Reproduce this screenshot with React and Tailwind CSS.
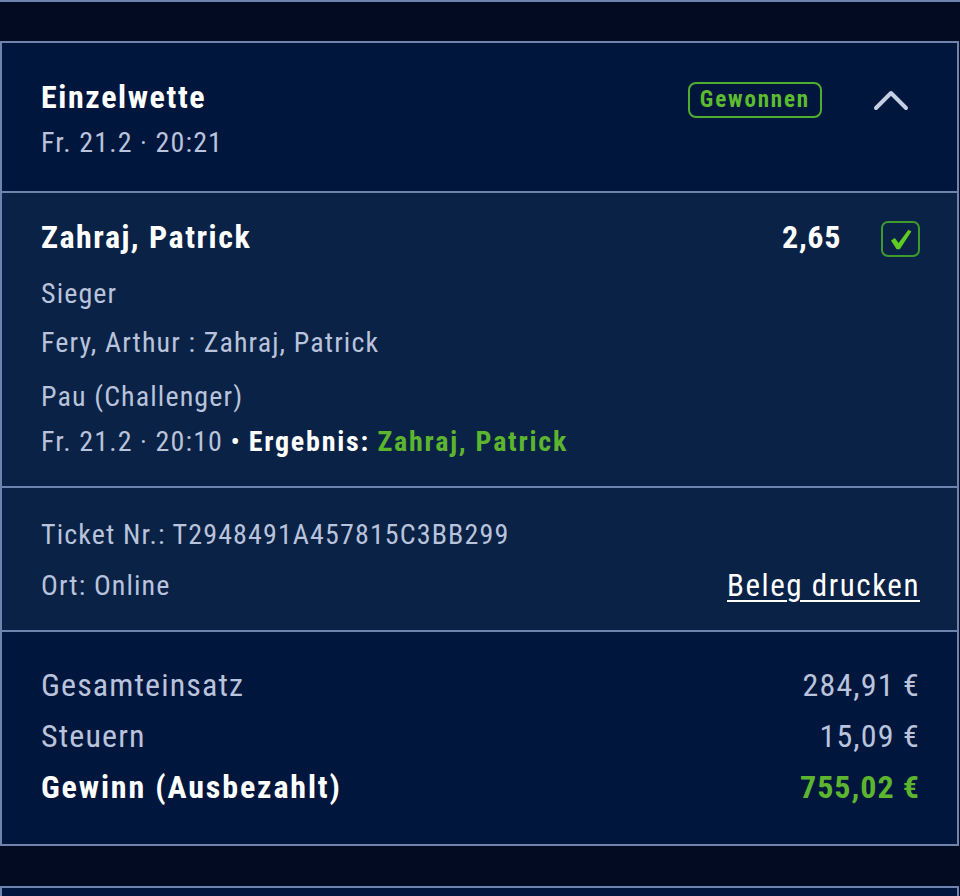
import React from 'react';

const ChevronUp = () => (
  <svg width="36" height="22" viewBox="0 0 36 22" fill="none" className="mr-[11px]">
    <path d="M3 19 L18 4 L33 19" stroke="#c6cee4" strokeWidth="4" strokeLinecap="round" strokeLinejoin="round" />
  </svg>
);

const CheckMark = () => (
  <svg width="22" height="21" viewBox="0 0 22 21">
    <path d="M1 11.5 L4.8 9 L8.6 14 L18.4 0.8 L21.4 2.6 L9.8 20.2 L6.6 20.2 Z" fill="#5fcc24" />
  </svg>
);

const SummaryRow = ({ label, value, strong }) => (
  <div className="flex items-center justify-between leading-[40px]">
    <span className={strong ? 'font-bold tracking-[0.058em] text-white' : 'text-[#b9c3dc]'}>{label}</span>
    <span className={strong ? 'font-bold tracking-[0.03em] text-[#5db52f]' : 'text-[#b9c3dc]'}>{value}</span>
  </div>
);

export default function App() {
  return (
    <div className="min-h-[896px] bg-[#020b22] font-['Roboto_Condensed',Roboto,sans-serif] tracking-[0.07em]">
      <div className="h-[2px] bg-[#6f84ad]" />
      <div className="h-[39px]" />

      <div className="mr-[1px] border-2 border-[#6f84ad]">
        {/* header */}
        <div className="flex items-start justify-between bg-[#01163d] pb-[30px] pl-[39px] pr-[37px] pt-[34px]">
          <div>
            <div className="text-[32px] font-bold leading-[40px] tracking-[0.05em] text-white">Einzelwette</div>
            <div className="mt-2 text-[28px] leading-[36px] text-[#b9c3dc]">Fr. 21.2 · 20:21</div>
          </div>
          <div className="mt-[5px] flex items-center gap-[51px]">
            <span className="rounded-[8px] border-2 border-[#4fae2f] px-[10px] text-[23px] font-bold leading-[32px] tracking-[0.08em] text-[#5dbb30]">
              Gewonnen
            </span>
            <ChevronUp />
          </div>
        </div>

        {/* selection */}
        <div className="border-t-2 border-[#6f84ad] bg-[#0a2246] pb-[26px] pl-[39px] pr-[37px] pt-[24px]">
          <div className="flex items-start justify-between">
            <span className="text-[32px] font-bold leading-[40px] tracking-[0.047em] text-white">Zahraj, Patrick</span>
            <div className="flex items-start gap-[40px]">
              <span className="text-[32px] font-bold leading-[40px] tracking-[0.02em] text-white">2,65</span>
              <span className="mt-[4px] flex h-[36px] w-[39px] items-center justify-center rounded-[7px] border-2 border-[#3f9a2e]">
                <CheckMark />
              </span>
            </div>
          </div>
          <div className="text-[28px] leading-[36px] text-[#b9c3dc]">
            <div className="mt-[19px]">Sieger</div>
            <div className="mt-[13px]">Fery, Arthur : Zahraj, Patrick</div>
            <div className="mt-[18px]">Pau (Challenger)</div>
            <div className="mt-[9px]">
              Fr. 21.2 · 20:10 <span className="text-white">•</span>{' '}
              <span className="font-bold tracking-[0.063em] text-white">Ergebnis:</span>{' '}
              <span className="font-bold tracking-[0.063em] text-[#5db52f]">Zahraj, Patrick</span>
            </div>
          </div>
        </div>

        {/* ticket */}
        <div className="border-t-2 border-[#6f84ad] bg-[#0a2246] pb-[26px] pl-[39px] pr-[37px] pt-[29px] text-[28px] leading-[36px] text-[#b9c3dc]">
          <div>Ticket Nr.: T2948491A457815C3BB299</div>
          <div className="mt-[15px] flex items-center justify-between">
            <span>Ort: Online</span>
            <a className="text-[31px] tracking-[0.05em] text-white underline decoration-2 underline-offset-[4px]">Beleg drucken</a>
          </div>
        </div>

        {/* summary */}
        <div className="space-y-[11px] border-t-2 border-[#6f84ad] bg-[#01163d] pb-[37px] pl-[39px] pr-[37px] pt-[33px] text-[32px]">
          <SummaryRow label="Gesamteinsatz" value="284,91 €" />
          <SummaryRow label="Steuern" value="15,09 €" />
          <SummaryRow label="Gewinn (Ausbezahlt)" value="755,02 €" strong />
        </div>
      </div>

      <div className="h-[40px]" />
      <div className="mr-[1px] h-[20px] border-l-2 border-r-2 border-t-2 border-[#6f84ad] bg-[#01163d]" />
    </div>
  );
}
